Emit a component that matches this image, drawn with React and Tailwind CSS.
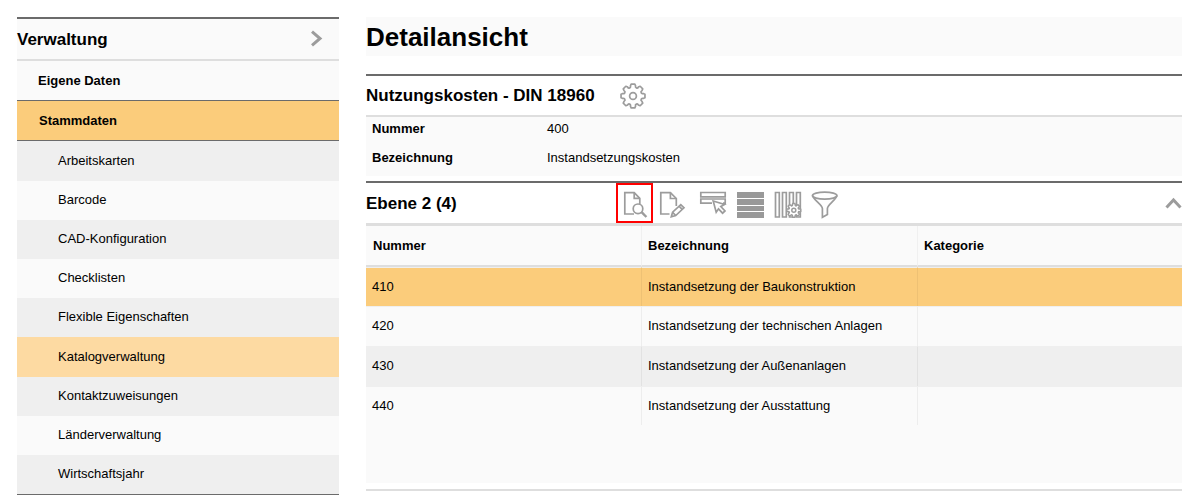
import React, { useState } from "react";

const navItems = [
  "Arbeitskarten",
  "Barcode",
  "CAD-Konfiguration",
  "Checklisten",
  "Flexible Eigenschaften",
  "Katalogverwaltung",
  "Kontaktzuweisungen",
  "Länderverwaltung",
  "Wirtschaftsjahr",
];

const rows = [
  { nummer: "410", bezeichnung: "Instandsetzung der Baukonstruktion" },
  { nummer: "420", bezeichnung: "Instandsetzung der technischen Anlagen" },
  { nummer: "430", bezeichnung: "Instandsetzung der Außenanlagen" },
  { nummer: "440", bezeichnung: "Instandsetzung der Ausstattung" },
];

// outline of a cog with eight broad teeth and small round notches
function gearPath(cx, cy, outer, inner) {
  const at = (r, a) =>
    `${(cx + r * Math.sin(a)).toFixed(2)} ${(cy - r * Math.cos(a)).toFixed(2)}`;
  const notch = (inner * 0.14).toFixed(2);
  let d = "";
  for (let i = 0; i < 8; i++) {
    const mid = (i * Math.PI) / 4;
    d += `${i ? "L" : "M"}${at(outer, mid - 0.15)}L${at(outer, mid + 0.15)}`;
    d += `L${at(inner, mid + 0.25)}`;
    d += `A${notch} ${notch} 0 0 0 ${at(inner, mid + Math.PI / 4 - 0.25)}`;
  }
  return `${d}Z`;
}

function ToolButton({ label, marked, children }) {
  return (
    <button
      type="button"
      aria-label={label}
      className={
        marked
          ? "mr-px h-10 w-[37px] overflow-hidden outline-2 -outline-offset-2 outline-[#f00]"
          : "h-10 w-[38px]"
      }
    >
      <svg
        width="38"
        height="40"
        viewBox="0 0 38 40"
        fill="none"
        stroke="#9c9c9c"
        strokeWidth="1.7"
        className="max-w-none"
      >
        {children}
      </svg>
    </button>
  );
}

export default function App() {
  const [active, setActive] = useState("Katalogverwaltung");
  const [selected, setSelected] = useState("410");
  const [open, setOpen] = useState(true);

  return (
    <div className="flex items-start gap-[27px] bg-white pt-[17px] pl-[17px] font-['Liberation_Sans',Arial,sans-serif] text-[13px] leading-5 text-black">
      <nav className="w-[322px] shrink-0 border-t-2 border-b border-t-[#6b6b6b] border-b-[#6b6b6b] bg-[#fafafa]">
        <div className="flex h-[42px] items-center justify-between border-b-2 border-[#dedede] pr-4">
          <h2 className="pt-px text-[17px] font-bold">Verwaltung</h2>
          <button type="button" aria-label="Menü einklappen">
            <svg width="14" height="18" viewBox="0 0 14 18" fill="none" stroke="#9c9c9c" strokeWidth="3">
              <path d="M3 1.7L11 8.5L3 15.3" />
            </svg>
          </button>
        </div>
        <a href="#eigene-daten" className="flex h-[39px] items-center pl-[21px] font-bold">
          Eigene Daten
        </a>
        <a
          href="#stammdaten"
          className="flex h-[41px] items-center border-y border-[#6b6b6b] bg-[#fbcc7b] pl-[22px] font-bold"
        >
          Stammdaten
        </a>
        <ul>
          {navItems.map((item) => (
            <li key={item} className="odd:bg-[#efefef]">
              <a
                href={`#${item}`}
                onClick={() => setActive(item)}
                className={`flex items-center pb-px pl-[41px] ${
                  item === active ? "h-10 bg-[#fddaa2]" : item === navItems[0] ? "h-10" : "h-[39px]"
                }`}
              >
                {item}
              </a>
            </li>
          ))}
        </ul>
      </nav>

      <main className="min-w-0 flex-1">
        <h1 className="mb-[18px] bg-[#fafafa] pt-px text-[26px] leading-[38px] font-bold">Detailansicht</h1>

        <section className="mb-[5px] border-t-2 border-[#6b6b6b]">
          <div className="flex h-[41px] items-center gap-[25px] border-b-2 border-[#dedede]">
            <h2 className="pt-px text-[17px] font-bold">Nutzungskosten - DIN 18960</h2>
            <button type="button" aria-label="Einstellungen">
              <svg
                width="26"
                height="26"
                viewBox="0 0 26 26"
                fill="none"
                stroke="#9c9c9c"
                strokeWidth="1.7"
                strokeLinejoin="round"
              >
                <path d={gearPath(13, 13, 12.1, 10.4)} />
                <circle cx="13" cy="13" r="3.4" />
              </svg>
            </button>
          </div>
          <dl className="grid grid-cols-[175px_1fr] gap-y-[9px] bg-[#fafafa] pt-[2px] pb-2 pl-[6px]">
            <dt className="font-bold">Nummer</dt>
            <dd>400</dd>
            <dt className="font-bold">Bezeichnung</dt>
            <dd>Instandsetzungskosten</dd>
          </dl>
        </section>

        <section className="border-t-2 border-b-2 border-t-[#6b6b6b] border-b-[#dedede] pb-[6px]">
          <div className="flex h-[43px] items-center border-b-[3px] border-[#dedede]">
            <h2 className="w-[250px] pt-px text-[17px] font-bold">Ebene 2 (4)</h2>
            <div className="flex flex-1">
              <ToolButton label="Details anzeigen" marked>
                <path d="M23.8 21V15.3L18.2 9.6H8.8V31H18" />
                <path d="M18.2 9.6V15.3H23.8" />
                <circle cx="22" cy="25.8" r="4.8" />
                <path d="M25.6 29.2L30.4 34" strokeWidth="2.4" />
              </ToolButton>
              <ToolButton label="Bearbeiten">
                <path d="M22.3 23V15.5L16.4 9.6H6.8V31H15.5" />
                <path d="M16.4 9.6V15.5H22.3" />
                <path d="M17.3 33.8L18.6 29.2L26.8 21.6L30 24.8L21.7 32.6Z" />
                <path d="M18.6 29.2L21.7 32.6M25 23.2L28.2 26.4" />
              </ToolButton>
              <ToolButton label="Zeile auswählen">
                <path d="M8.8 9.5H33.2V13.8H8.8Z" />
                <path d="M20 20.2H8.8V16H33.2V20.2H31" />
                <path
                  d="M21.2 18L32.6 21.4L28.8 23.5L33 28L30.6 30.2L26.5 25.8L24.2 29.2Z"
                  fill="white"
                />
              </ToolButton>
              <ToolButton label="Listenansicht">
                <path
                  d="M7 9H34V15H7ZM7 16H34V22H7ZM7 23H34V28H7ZM7 29H34V35H7Z"
                  fill="#999999"
                  stroke="none"
                />
              </ToolButton>
              <ToolButton label="Spalten konfigurieren">
                <path d="M7.5 9.5H11.3V34H7.5ZM14.5 9.5H18.3V34H14.5Z" />
                <path d="M21.5 34V9.5H25.3V34ZM28.5 34V9.5H32.3V34Z" />
                <path d={gearPath(25.8, 27.3, 7, 5.8)} fill="white" strokeWidth="1.5" />
                <circle cx="25.8" cy="27.3" r="2" strokeWidth="1.5" />
              </ToolButton>
              <ToolButton label="Filter">
                <ellipse cx="18.7" cy="12.6" rx="12.2" ry="3.5" />
                <path d="M6.5 12.6C6.5 16 16.4 22 16.4 25.5V34.2L21.4 31.5V25.5C21.4 22 30.9 16 30.9 12.6" />
              </ToolButton>
            </div>
            <button type="button" aria-label="Bereich einklappen" onClick={() => setOpen(!open)}>
              <svg width="17" height="12" viewBox="0 0 17 12" fill="none" stroke="#9c9c9c" strokeWidth="3">
                <path d="M1.5 10.5L8.5 3L15.5 10.5" />
              </svg>
            </button>
          </div>

          {open && (
            <div className="bg-[#fafafa] pb-[58px]">
              <table className="w-full table-fixed border-separate border-spacing-0 text-left">
                <thead>
                  <tr className="h-[41px]">
                    <th className="w-[276px] border-r border-b-2 border-r-[#f0f0f0] border-b-[#dedede] pl-[7px]">
                      Nummer
                    </th>
                    <th className="w-[276px] border-r border-b-2 border-r-[#f0f0f0] border-b-[#dedede] pl-[6px]">
                      Bezeichnung
                    </th>
                    <th className="border-b-2 border-[#dedede] pl-[6px]">Kategorie</th>
                  </tr>
                </thead>
                <tbody>
                  {rows.map((row) => (
                    <tr
                      key={row.nummer}
                      onClick={() => setSelected(row.nummer)}
                      className={`h-10 first:h-[39px] last:h-[39px] ${
                        row.nummer === selected ? "bg-[#fbcc7b]" : "odd:bg-[#efefef]"
                      }`}
                    >
                      <td className="border-t border-r border-t-[#efefef] border-r-black/5 pb-px pl-[6px]">
                        {row.nummer}
                      </td>
                      <td className="border-t border-r border-t-[#efefef] border-r-black/5 pb-px pl-[6px]">
                        {row.bezeichnung}
                      </td>
                      <td className="border-t border-[#efefef]"></td>
                    </tr>
                  ))}
                </tbody>
              </table>
            </div>
          )}
        </section>
      </main>
    </div>
  );
}
